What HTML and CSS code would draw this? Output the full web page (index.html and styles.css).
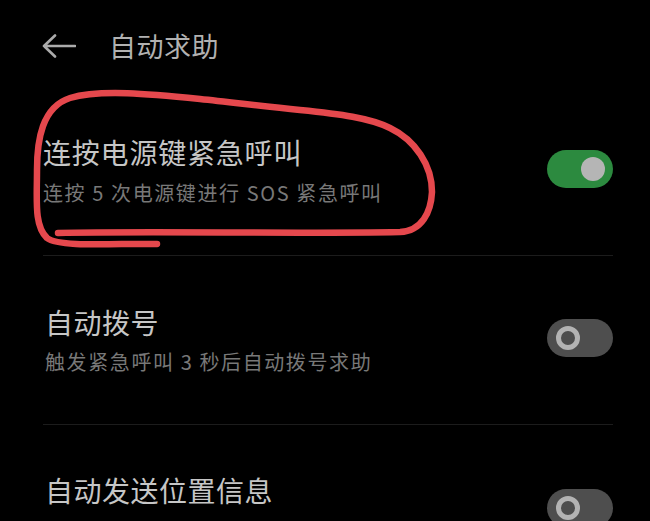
FILE: index.html
```html
<!DOCTYPE html>
<html lang="zh-CN">
<head>
<meta charset="utf-8">
<title>自动求助</title>
<link rel="stylesheet" href="styles.css">
</head>
<body>
<div class="screen">
  <header class="appbar">
    <svg class="back" width="34" height="24" viewBox="0 0 34 24" aria-hidden="true">
      <path d="M2 12H33M13 1.5L2 12L13 22.5" fill="none" stroke="#ababab" stroke-width="2.6" stroke-linecap="round" stroke-linejoin="round"/>
    </svg>
    <h1 class="appbar-title">自动求助</h1>
  </header>

  <ul class="list">
    <li class="row">
      <div class="text">
        <div class="title t1">连按电源键紧急呼叫</div>
        <div class="sub">连按 5 次电源键进行 SOS 紧急呼叫</div>
      </div>
      <span class="switch on"><span class="knob"></span></span>
    </li>
    <li class="row">
      <div class="text">
        <div class="title">自动拨号</div>
        <div class="sub">触发紧急呼叫 3 秒后自动拨号求助</div>
      </div>
      <span class="switch off"><span class="knob"></span></span>
    </li>
    <li class="row last">
      <div class="text">
        <div class="title">自动发送位置信息</div>
      </div>
      <span class="switch off"><span class="knob"></span></span>
    </li>
  </ul>

  <svg class="scribble" width="650" height="521" viewBox="0 0 650 521" aria-hidden="true">
    <path d="M58 233 C150 231 300 234 400 232 C422 231 431 212 432 192 C432 165 415 140 390 128 C370 118 340 114 300 110 C260 106 230 102 200 99 C150 94 100 89 70 98 C42 107 37 140 37 170 C37 200 34 226 47 238 C60 248 120 243 157 244" fill="none" stroke="#e5484d" stroke-width="6.5" stroke-linecap="round" stroke-linejoin="round"/>
  </svg>
</div>
</body>
</html>
```

FILE: styles.css
```css
html, body {
  margin: 0;
  padding: 0;
  background: #000;
}

body {
  font-family: "Noto Sans CJK SC", "Noto Sans", sans-serif;
  color: #c8c8c8;
}

.screen {
  position: relative;
  width: 650px;
  height: 521px;
  overflow: hidden;
  background: #000;
}

.appbar {
  display: flex;
  align-items: center;
  height: 86px;
  box-sizing: border-box;
  padding: 6px 0 0 42px;
}

.back {
  display: block;
  flex: none;
}

.appbar-title {
  margin: 0 0 0 33px;
  font-size: 27px;
  font-weight: 400;
  line-height: 1.2;
  letter-spacing: 0.5px;
  color: #b1b1b1;
}

.list {
  list-style: none;
  margin: 0 37px 0 43px;
  padding: 0;
}

.row {
  display: flex;
  align-items: center;
  justify-content: space-between;
  padding: 50px 0 50px 2px;
  border-bottom: 1px solid #1c1c1c;
}

.row.last {
  border-bottom: none;
  align-items: flex-start;
  padding-top: 49px;
  padding-bottom: 0;
}

.row.last .switch {
  margin-top: 15px;
}

.text {
  display: flex;
  flex-direction: column;
  gap: 11px;
}

.title {
  font-size: 28px;
  line-height: 1.2;
  letter-spacing: 0.5px;
  color: #c6c6c6;
}

.title.t1 {
  letter-spacing: 0.8px;
  margin-left: -2px;
}

.sub {
  font-size: 20px;
  line-height: 1.2;
  letter-spacing: 1.6px;
  color: #787878;
}

.row:first-child .sub {
  margin-left: -2px;
}

.switch {
  position: relative;
  flex: none;
  width: 66px;
  height: 38px;
  border-radius: 19px;
  margin-top: -3px;
}

.switch.on {
  background: #2c8a3f;
}

.switch.off {
  background: #4e4e4e;
}

.knob {
  position: absolute;
  top: 7px;
  width: 24px;
  height: 24px;
  border-radius: 50%;
  box-sizing: border-box;
}

.switch.on .knob {
  right: 8px;
  background: #b5b5b5;
}

.switch.off .knob {
  left: 9px;
  border: 5px solid #b3b3b3;
  background: #4e4e4e;
}

.scribble {
  position: absolute;
  left: 0;
  top: 0;
  pointer-events: none;
}
```
